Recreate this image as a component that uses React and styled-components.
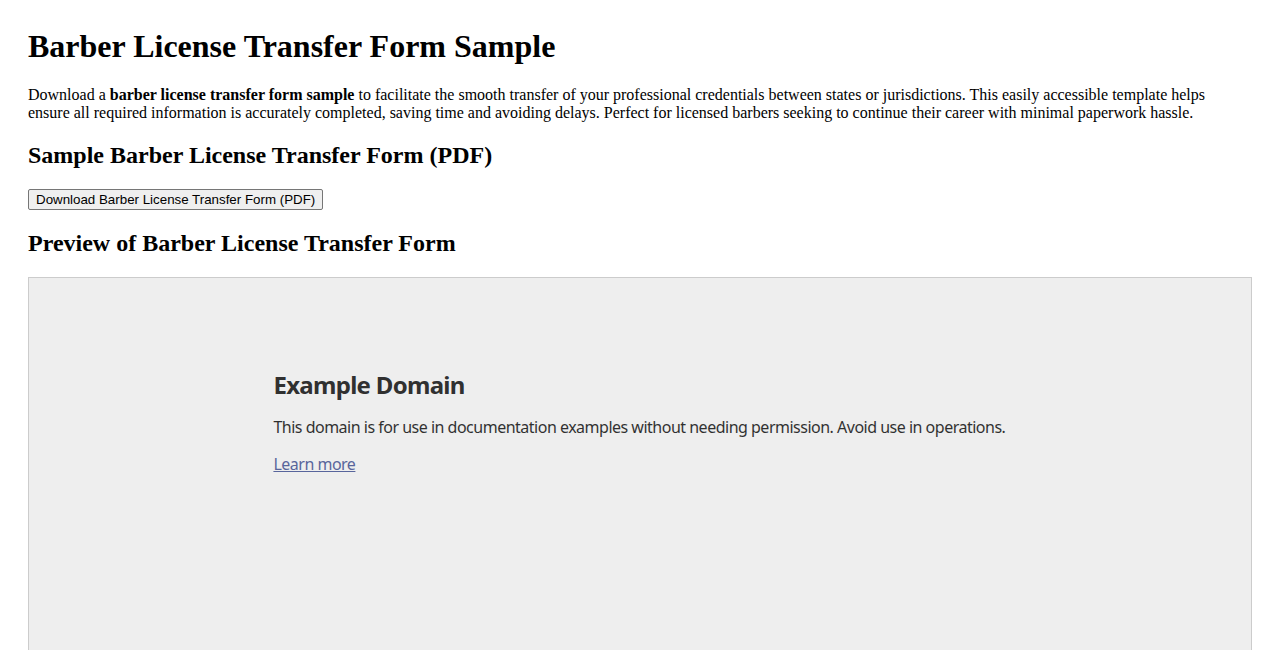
import React from 'react';
import styled, { createGlobalStyle } from 'styled-components';

const GlobalStyle = createGlobalStyle`
  html, body {
    margin: 0;
    padding: 0;
    background: #fff;
  }
  body {
    margin: 8px;
    font-family: "Liberation Serif", "Times New Roman", serif;
    font-size: 16px;
    color: #000;
  }
`;

const Page = styled.div`
  padding: 20px;
`;

const Title = styled.h1`
  font-size: 32px;
  font-weight: bold;
  margin: 0 0 21.44px 0;
`;

const Intro = styled.p`
  margin: 16px 0;
  line-height: normal;
`;

const SectionTitle = styled.h2`
  font-size: 24px;
  font-weight: bold;
  margin: 19.92px 0;
`;

const ButtonRow = styled.div`
  margin: 19.92px 0;
`;

const DownloadButton = styled.button`
  font-family: "Liberation Sans", Arial, sans-serif;
  font-size: 13.333px;
  color: #000;
  background: #efefef;
  border: 1px solid #767676;
  border-radius: 2px;
  padding: 2px 7px;
  cursor: pointer;
  &:hover {
    background: #e5e5e5;
  }
`;

const Preview = styled.div`
  width: 100%;
  border: 1px solid #ccc;
  background: #eee;
  height: 520px;
  padding-top: 91px;
`;

const PreviewBody = styled.div`
  width: 60%;
  margin: 0 auto;
  font-family: "Noto Sans", "Open Sans", sans-serif;
  color: #000;
`;

const PreviewHeading = styled.h3`
  font-size: 24px;
  font-weight: bold;
  line-height: 32px;
  margin: 0 0 14px 0;
  color: #303030;
  letter-spacing: -0.7px;
`;

const PreviewText = styled.div`
  opacity: 0.8;
  font-size: 16px;
  line-height: 21px;
  letter-spacing: -0.5px;
  white-space: nowrap;
  p {
    margin: 16px 0;
  }
  a {
    color: #348;
  }
`;

export default function App() {
  return (
    <>
      <GlobalStyle />
      <Page>
        <Title>Barber License Transfer Form Sample</Title>
        <Intro>
          Download a <strong>barber license transfer form sample</strong> to facilitate the smooth
          transfer of your professional credentials between states or jurisdictions. This easily
          accessible template helps ensure all required information is accurately completed, saving
          time and avoiding delays. Perfect for licensed barbers seeking to continue their career
          with minimal paperwork hassle.
        </Intro>
        <SectionTitle>Sample Barber License Transfer Form (PDF)</SectionTitle>
        <ButtonRow>
          <DownloadButton>Download Barber License Transfer Form (PDF)</DownloadButton>
        </ButtonRow>
        <SectionTitle>Preview of Barber License Transfer Form</SectionTitle>
        <Preview>
          <PreviewBody>
            <PreviewHeading>Example Domain</PreviewHeading>
            <PreviewText>
              <p>
                This domain is for use in documentation examples without needing permission. Avoid
                use in operations.
              </p>
              <p>
                <a href="#">Learn more</a>
              </p>
            </PreviewText>
          </PreviewBody>
        </Preview>
      </Page>
    </>
  );
}
